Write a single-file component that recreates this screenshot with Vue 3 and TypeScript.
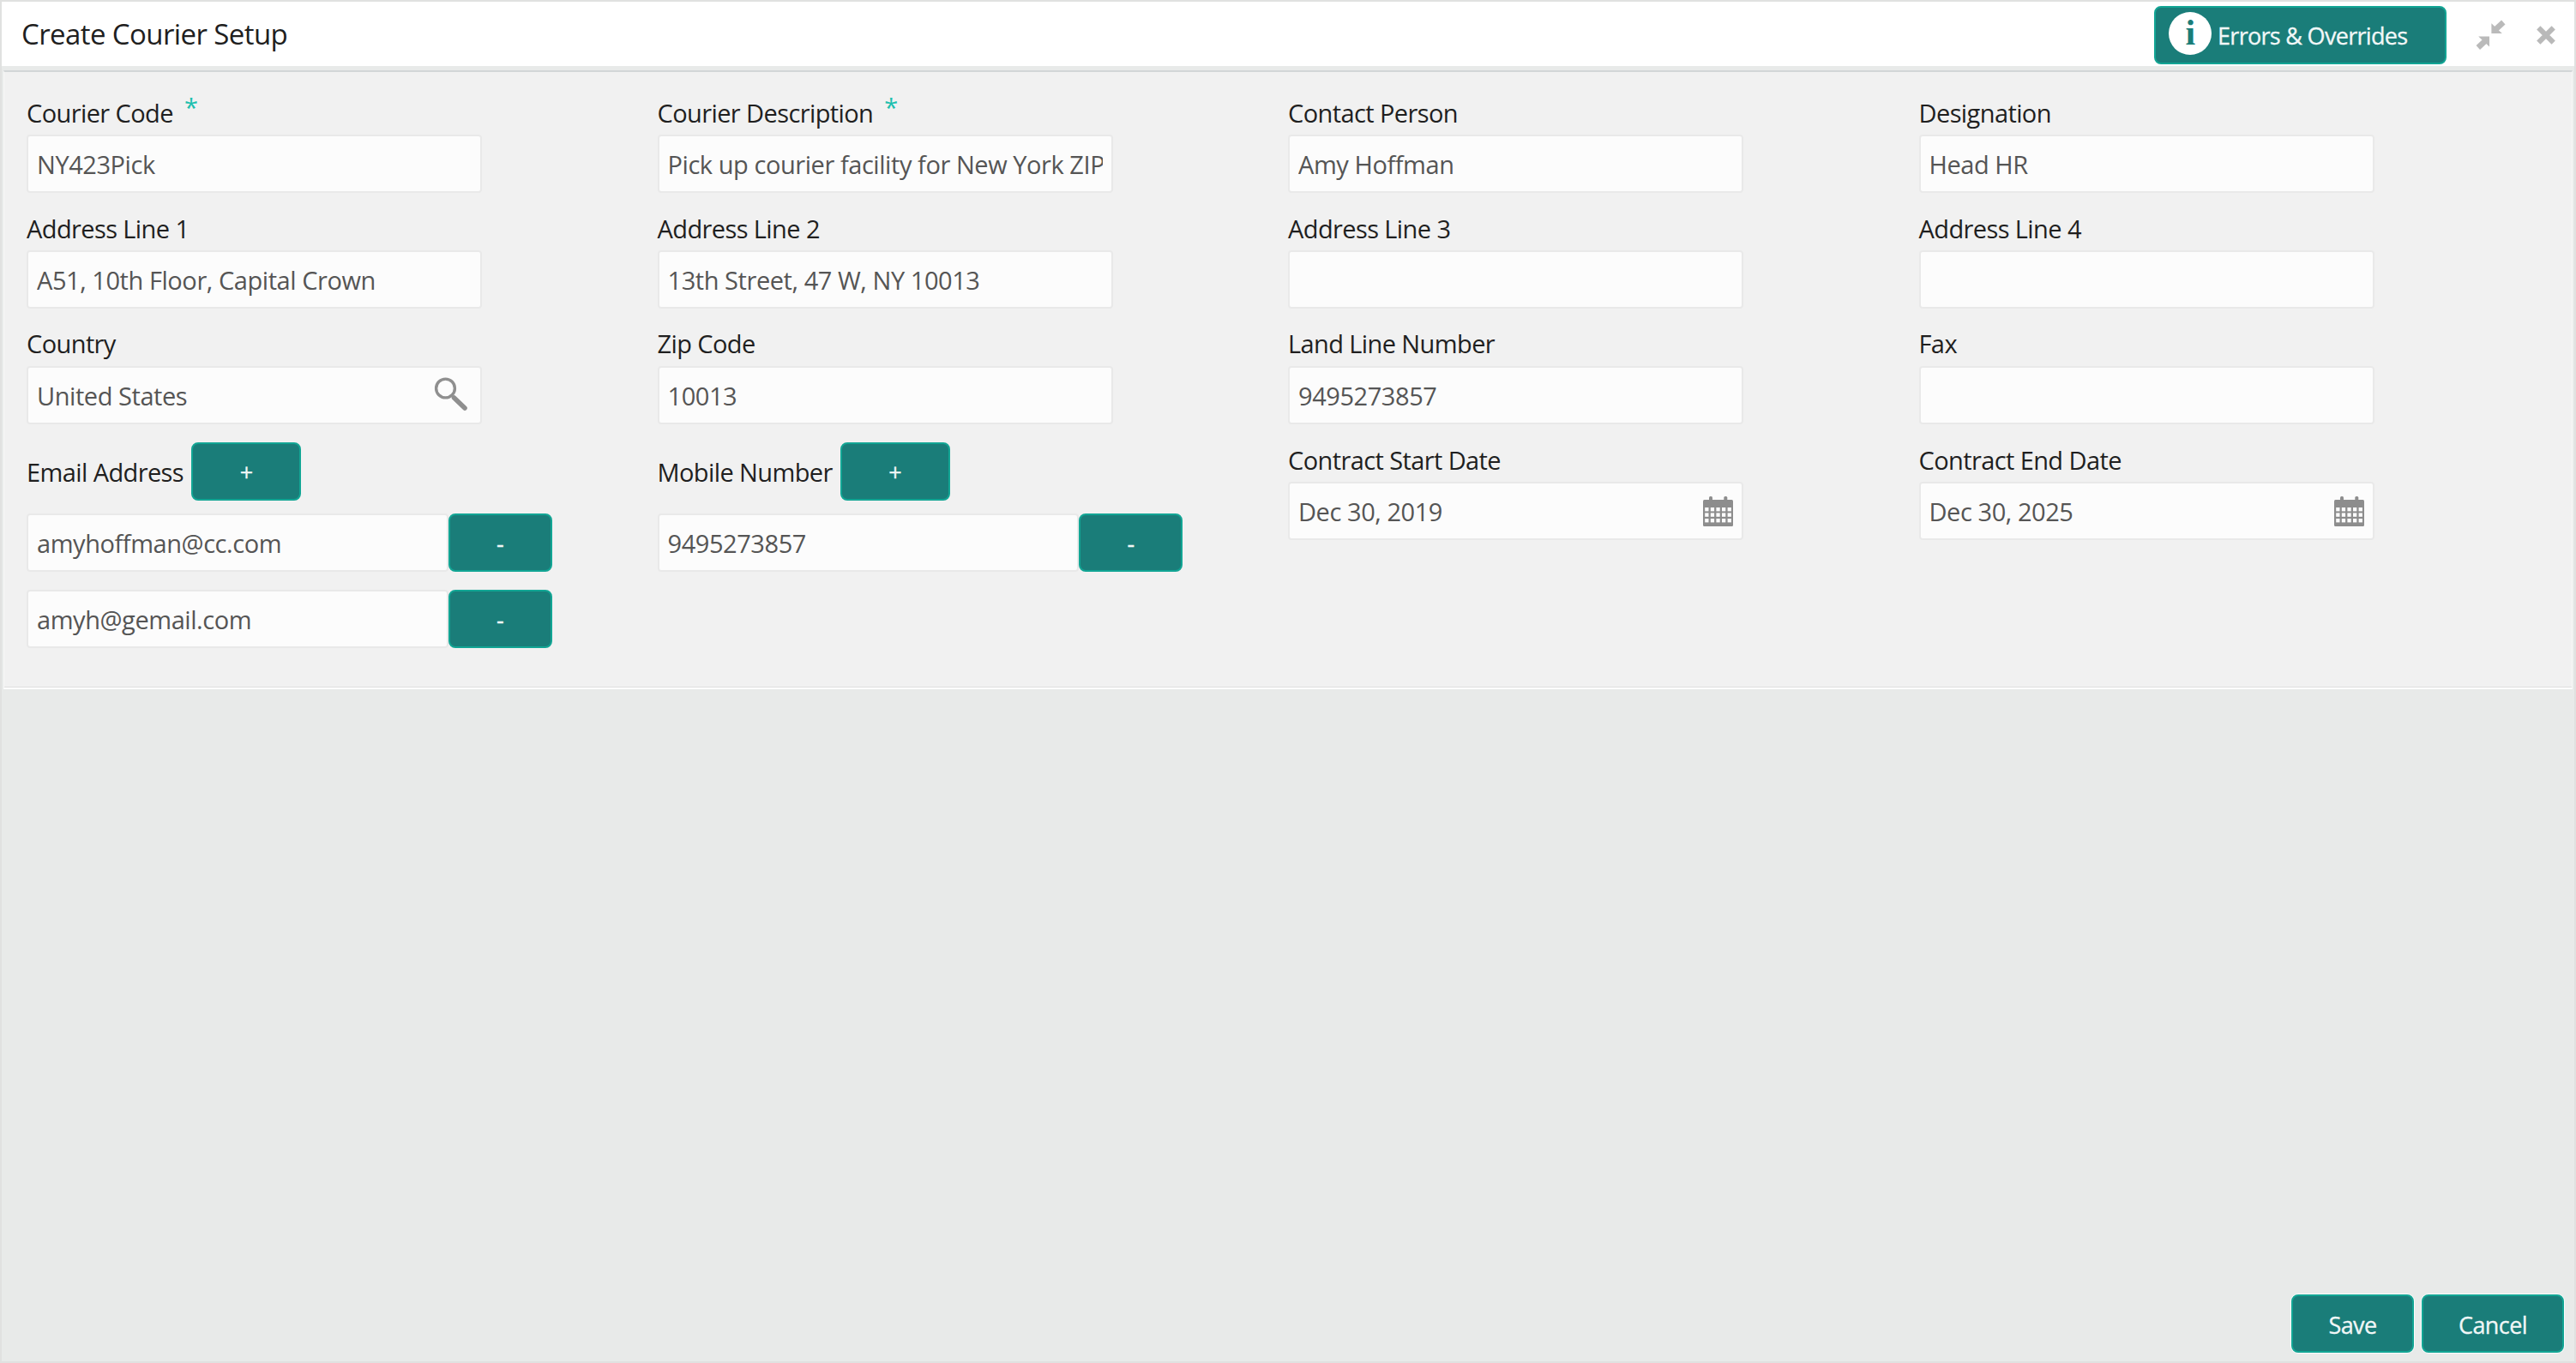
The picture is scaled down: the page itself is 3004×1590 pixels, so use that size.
<script setup lang="ts">
interface Field {
  label: string
  value: string
  required?: boolean
  icon?: 'search' | 'calendar'
}
interface Multi {
  label: string
  values: string[]
}

const rows: Field[][] = [
  [
    { label: 'Courier Code', value: 'NY423Pick', required: true },
    { label: 'Courier Description', value: 'Pick up courier facility for New York ZIP 10013', required: true },
    { label: 'Contact Person', value: 'Amy Hoffman' },
    { label: 'Designation', value: 'Head HR' },
  ],
  [
    { label: 'Address Line 1', value: 'A51, 10th Floor, Capital Crown' },
    { label: 'Address Line 2', value: '13th Street, 47 W, NY 10013' },
    { label: 'Address Line 3', value: '' },
    { label: 'Address Line 4', value: '' },
  ],
  [
    { label: 'Country', value: 'United States', icon: 'search' },
    { label: 'Zip Code', value: '10013' },
    { label: 'Land Line Number', value: '9495273857' },
    { label: 'Fax', value: '' },
  ],
]
const contacts: Multi[] = [
  { label: 'Email Address', values: ['amyhoffman@cc.com', 'amyh@gemail.com'] },
  { label: 'Mobile Number', values: ['9495273857'] },
]
const dates: Field[] = [
  { label: 'Contract Start Date', value: 'Dec 30, 2019', icon: 'calendar' },
  { label: 'Contract End Date', value: 'Dec 30, 2025', icon: 'calendar' },
]
const cellRows = [13, 19.4, 26]
const cellCols = [2.2, 8.8, 15.4, 22, 28.6]
</script>

<template>
  <div class="window">
    <header class="bar">
      <h1>Create Courier Setup</h1>
      <div class="tools">
        <button class="btn errors">
          <span class="info">i</span>
          <span class="caption">Errors &amp; Overrides</span>
        </button>
        <svg class="shrink" viewBox="0 0 36 36" width="36" height="36">
          <path d="M18.400 4.200V16H30.800Z M16 19.500H3.200L16 31.500Z" fill="#bababa" />
          <path d="M22 12.500 32.300 3M12.500 23.500 2.800 32.500" stroke="#bababa" stroke-width="6.500" />
        </svg>
        <svg class="close" viewBox="0 0 22 22" width="22" height="22">
          <path d="M2.300 2.300 19.700 19.700M19.700 2.300 2.300 19.700" stroke="#b9b9b9" stroke-width="6" />
        </svg>
      </div>
    </header>

    <section class="panel">
      <div v-for="(row, r) in rows" :key="r" class="row">
        <div v-for="f in row" :key="f.label" class="field">
          <label>{{ f.label }}<span v-if="f.required" class="star">*</span></label>
          <div class="box">
            <input type="text" :value="f.value" />
            <svg v-if="f.icon === 'search'" class="search" viewBox="0 0 40 40" width="40" height="40">
              <circle cx="13.500" cy="13" r="10.900" fill="none" stroke="#8f8f8f" stroke-width="3.400" />
              <path d="M23.500 24 36 36" stroke="#8f8f8f" stroke-width="5.600" stroke-linecap="round" />
            </svg>
          </div>
        </div>
      </div>
      <div class="row last">
        <div v-for="c in contacts" :key="c.label" class="field contact">
          <div class="head">
            <label>{{ c.label }}</label>
            <button class="btn plus">+</button>
          </div>
          <div v-for="v in c.values" :key="v" class="entry">
            <div class="box"><input type="text" :value="v" /></div>
            <button class="btn minus">-</button>
          </div>
        </div>
        <div v-for="f in dates" :key="f.label" class="field">
          <label>{{ f.label }}</label>
          <div class="box">
            <input type="text" :value="f.value" />
            <svg class="calendar" viewBox="0 0 35 35" width="35" height="35">
              <rect x="0" y="4" width="35" height="31" rx="1.500" fill="#8d8d8d" />
              <rect x="7" y="0" width="4" height="7" rx="1.500" fill="#8d8d8d" />
              <rect x="24.300" y="0" width="4" height="7" rx="1.500" fill="#8d8d8d" />
              <template v-for="y in cellRows" :key="y">
                <rect v-for="x in cellCols" :key="x" :x="x" :y="y" width="4.300" height="4.400" fill="#fcfcfc" />
              </template>
            </svg>
          </div>
        </div>
      </div>
    </section>

    <footer class="actions">
      <button class="btn save">Save</button>
      <button class="btn cancel">Cancel</button>
    </footer>
  </div>
</template>

<style>
body {
  margin: 0;
}
</style>

<style scoped>
.window {
  box-sizing: border-box;
  width: 3004px;
  height: 1590px;
  border: 2px solid #e0e1e0;
  background: #e8eae9;
  display: flex;
  flex-direction: column;
  font-family: 'Open Sans', 'Noto Sans', sans-serif;
  font-size: 29px;
  color: #1f1f1f;
}
.bar {
  flex: none;
  height: 75px;
  margin-bottom: 5px;
  background: #fff;
  display: flex;
  justify-content: space-between;
}
h1 {
  margin: 0 0 0 23px;
  font-size: 33px;
  font-weight: 400;
  line-height: 76px;
  letter-spacing: -0.6px;
}
.tools {
  display: flex;
  align-items: flex-start;
}
.btn {
  box-sizing: border-box;
  flex: none;
  height: 68px;
  margin: 0;
  padding: 0;
  border: 2px solid #12a594;
  border-radius: 8px;
  background: #1a7d79;
  color: #f1f7f7;
  font-family: inherit;
  font-size: 27px;
  letter-spacing: -0.6px;
  -webkit-text-stroke: 0.3px #f1f7f7;
}
.errors {
  width: 341px;
  margin-top: 5px;
  padding-left: 15px;
  display: flex;
  align-items: center;
  gap: 7px;
}
.caption {
  letter-spacing: -0.7px;
}
.info {
  width: 50px;
  height: 50px;
  margin-top: -4px;
  border-radius: 50%;
  background: #fff;
  color: #1a7d79;
  font: bold 42px/48px 'Liberation Serif', serif;
  text-align: center;
  -webkit-text-stroke: 0;
}
.shrink {
  margin: 21px 0 0 34px;
}
.close {
  margin: 28px 22px 0 35px;
}
.panel {
  box-sizing: border-box;
  flex: none;
  height: 722px;
  margin: 0 2px;
  padding: 22px 26px 0 26px;
  border: 1px solid #f8f8f8;
  border-top: 2px solid #d2d6d7;
  border-bottom: 2px solid #fff;
  box-shadow: inset 0 -1px #dedede;
  background: #f1f1f1;
}
.row {
  display: flex;
  height: 135px;
}
.field {
  flex: none;
  width: 735.5px;
}
label {
  display: block;
  height: 51px;
  line-height: 51px;
  letter-spacing: -0.6px;
  white-space: nowrap;
}
.row:nth-child(3) label {
  line-height: 49px;
}
.star {
  margin-left: 13px;
  color: #1dbfae;
  position: relative;
  top: -7px;
}
.box {
  box-sizing: border-box;
  width: 531px;
  height: 68px;
  padding: 0 10px;
  border: 2px solid #e9e9e9;
  border-radius: 4px;
  background: #fcfcfc;
  display: flex;
  align-items: center;
}
input {
  flex: 1;
  min-width: 0;
  height: 60px;
  padding: 0;
  border: 0;
  outline: 0;
  background: transparent;
  color: #555;
  font: inherit;
  letter-spacing: -0.44px;
}
.search {
  margin: 0 4px 3px 0;
}
.calendar {
  margin-right: 0;
}
.head {
  display: flex;
  height: 83px;
  padding-top: 5px;
}
.head label {
  line-height: 69px;
}
.plus {
  width: 128px;
  margin-left: 9px;
}
.entry {
  display: flex;
  height: 67px;
  margin-bottom: 22px;
}
.entry .box {
  width: 491.5px;
}
.minus {
  width: 121px;
}
.actions {
  display: flex;
  justify-content: flex-end;
  gap: 9px;
  margin: auto 12px 10px 0;
}
.actions .btn {
  padding-top: 2px;
  box-shadow: 0 0 0 1px #f8fbfb;
}
.save {
  width: 143px;
}
.cancel {
  width: 166px;
}
</style>
